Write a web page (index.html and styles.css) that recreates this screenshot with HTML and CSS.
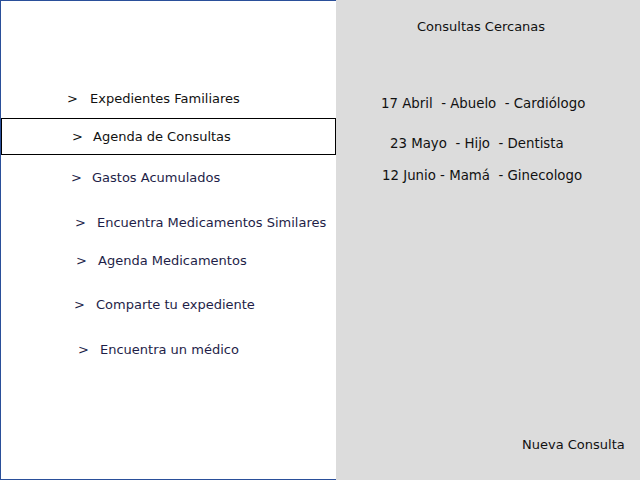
FILE: index.html
```html
<!DOCTYPE html>
<html lang="es">
<head>
  <meta charset="UTF-8" />
  <meta name="viewport" content="width=device-width, initial-scale=1.0" />
  <title>Consultas</title>
  <link rel="stylesheet" href="styles.css">
</head>
<body>
  <div class="app">
    <nav class="menu">
      <div class="menu-item item-1"><span class="arrow">&gt;</span>Expedientes Familiares</div>
      <div class="menu-item item-2 selected"><span class="arrow">&gt;</span>Agenda de Consultas</div>
      <div class="menu-item item-3 dim"><span class="arrow">&gt;</span>Gastos Acumulados</div>
      <div class="menu-item item-4 dim"><span class="arrow">&gt;</span>Encuentra Medicamentos Similares</div>
      <div class="menu-item item-5 dim"><span class="arrow">&gt;</span>Agenda Medicamentos</div>
      <div class="menu-item item-6 dim"><span class="arrow">&gt;</span>Comparte tu expediente</div>
      <div class="menu-item item-7 dim"><span class="arrow">&gt;</span>Encuentra un médico</div>
    </nav>

    <aside class="side">
      <div class="side-title">Consultas Cercanas</div>
      <div class="appointments">
        <div class="appt appt-1">17 Abril&nbsp; - Abuelo&nbsp; - Cardiólogo</div>
        <div class="appt appt-2">23 Mayo&nbsp; - Hijo&nbsp; - Dentista</div>
        <div class="appt appt-3">12 Junio - Mamá&nbsp; - Ginecologo</div>
      </div>
      <div class="new-appt">Nueva Consulta</div>
    </aside>
  </div>
</body>
</html>
```

FILE: styles.css
```css
body {
  margin: 0;
  font-family: "DejaVu Sans", sans-serif;
  font-size: 13px;
  background-color: #dcdcdc;
}
.app {
  display: flex;
  width: 640px;
  height: 480px;
}
.menu {
  width: 336px;
  height: 480px;
  background-color: white;
  border: 1px solid #2a4f9a;
  border-right: none;
  padding-top: 79px;
  box-sizing: border-box;
}
.menu-item {
  width: 335px;
  height: 37px;
  line-height: 35px;
  border: 1px solid transparent;
  box-sizing: border-box;
  color: #111;
  white-space: nowrap;
}
.menu-item.dim {
  color: #1e1e48;
}
.menu-item.selected {
  border-color: black;
}
.arrow {
  display: inline-block;
  width: 22px;
}
.item-1 .arrow { width: 23px; }
.item-2 .arrow, .item-3 .arrow { width: 21px; }
.item-1 { padding-left: 65px; }
.item-2 { padding-left: 70px; margin-top: 1px; }
.item-3 { padding-left: 69px; margin-top: 4px; }
.item-4 { padding-left: 73px; margin-top: 8px; }
.item-5 { padding-left: 74px; margin-top: 1px; }
.item-6 { padding-left: 72px; margin-top: 7px; }
.item-7 { padding-left: 76px; margin-top: 8px; }

.side {
  flex: 1;
  display: flex;
  flex-direction: column;
  color: #111;
  padding-top: 18px;
}
.side-title {
  padding-left: 81px;
  line-height: 18px;
}
.appointments {
  margin-top: 59px;
  font-size: 13.33px;
}
.appt {
  line-height: 18px;
  white-space: nowrap;
}
.appt-1 { padding-left: 45px; }
.appt-2 { padding-left: 54px; margin-top: 22px; }
.appt-3 { padding-left: 46px; margin-top: 14px; }
.new-appt {
  margin-top: auto;
  margin-bottom: 26px;
  padding-left: 186px;
  line-height: 18px;
}
```
